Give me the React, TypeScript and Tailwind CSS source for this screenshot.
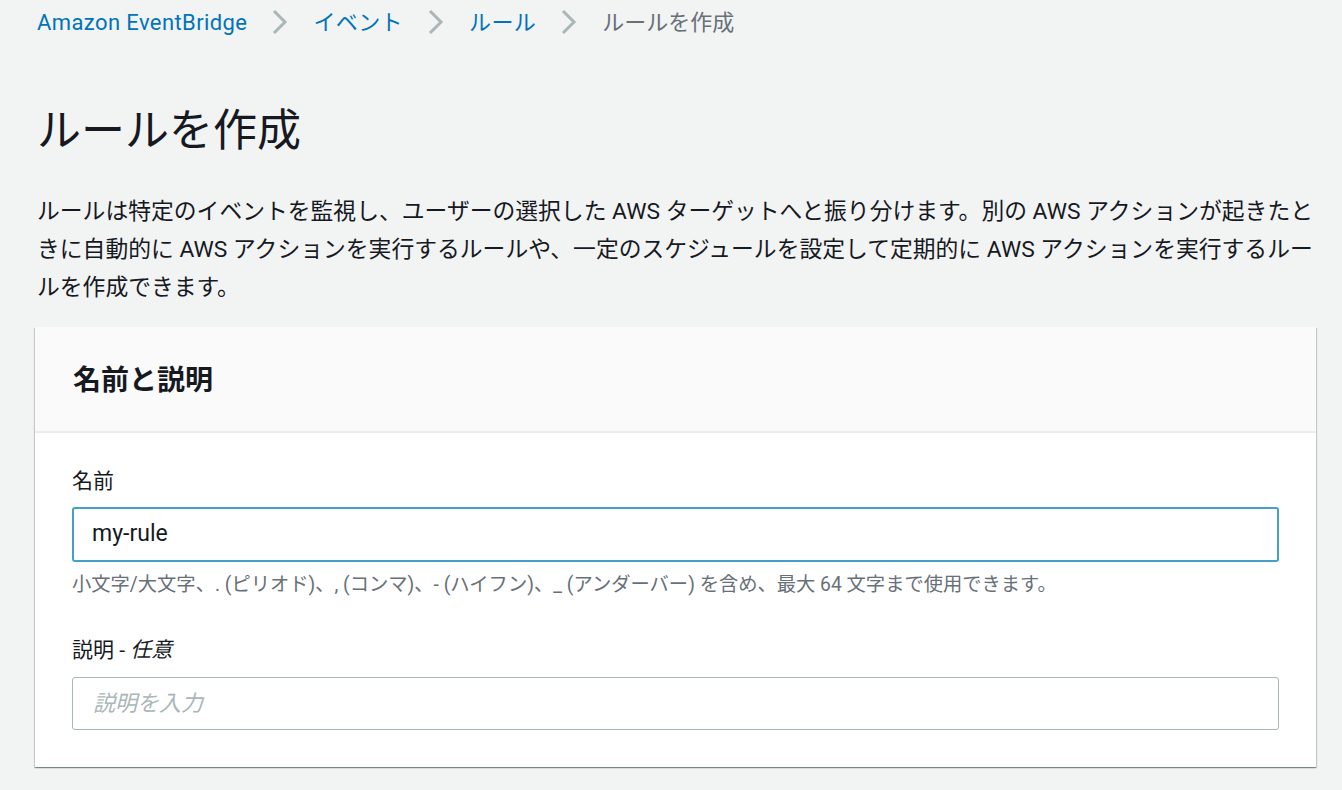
import React from 'react';

const FONT = 'font-["Roboto","Noto_Sans_CJK_JP",sans-serif]';

function Chevron() {
  return (
    <svg width="18" height="28" viewBox="0 0 18 28" className="shrink-0">
      <path d="M3 3 L14 14 L3 25" fill="none" stroke="#aab7b8" strokeWidth="3" />
    </svg>
  );
}

export default function App() {
  const crumbs = ['Amazon EventBridge', 'イベント', 'ルール'];

  return (
    <div className={`${FONT} min-h-[790px] bg-[#f2f3f3] pl-[35px] pr-[26px] text-[#16191f]`}>
      {/* breadcrumb */}
      <nav className="flex h-[44px] items-center gap-[24px] pl-[2px] text-[22px]">
        {crumbs.map((c) => (
          <React.Fragment key={c}>
            <a className="text-[#0073bb] tracking-[0.4px]">{c}</a>
            <Chevron />
          </React.Fragment>
        ))}
        <span className="text-[#687078]">ルールを作成</span>
      </nav>

      <h1 className="mt-[60px] pl-[2px] text-[44px] leading-[54px] font-normal">ルールを作成</h1>

      <p className="mt-[35px] pl-[2px] text-[22.8px] leading-[38px] whitespace-nowrap">
        ルールは特定のイベントを監視し、ユーザーの選択した AWS ターゲットへと振り分けます。別の AWS アクションが起きたと
        <br />
        きに自動的に AWS アクションを実行するルールや、一定のスケジュールを設定して定期的に AWS アクションを実行するルー
        <br />
        ルを作成できます。
      </p>

      <section className="mt-[20px] bg-white shadow-[0_1px_1px_0_rgba(0,28,36,0.3),1px_1px_1px_0_rgba(0,28,36,0.15),-1px_1px_1px_0_rgba(0,28,36,0.15)]">
        <div className="flex h-[106px] items-center border-b-2 border-[#eaeded] bg-[#fafafa] px-[38px]">
          <h2 className="mt-[3px] text-[28px] font-bold">名前と説明</h2>
        </div>
        <div className="px-[37px] pt-[33px] pb-[37px]">
          <label className="block text-[21px] leading-[30px]">名前</label>
          <div className="mt-[11px] flex h-[55px] items-center rounded-[3px] border-2 border-[#44a0c8] px-[18px] text-[23px]">
            my-rule
          </div>
          <p className="mt-[9px] text-[19.3px] leading-[28px] text-[#687078]">
            小文字/大文字、. (ピリオド)、, (コンマ)、- (ハイフン)、_ (アンダーバー) を含め、最大 64 文字まで使用できます。
          </p>
          <label className="mt-[36px] block text-[21px] leading-[30px]">
            説明 - <i>任意</i>
          </label>
          <div className="mt-[12px] flex h-[53px] items-center rounded-[3px] border border-[#aab7b8] px-[20px] text-[22px] italic text-[#aab7b8]">
            説明を入力
          </div>
        </div>
      </section>
    </div>
  );
}
